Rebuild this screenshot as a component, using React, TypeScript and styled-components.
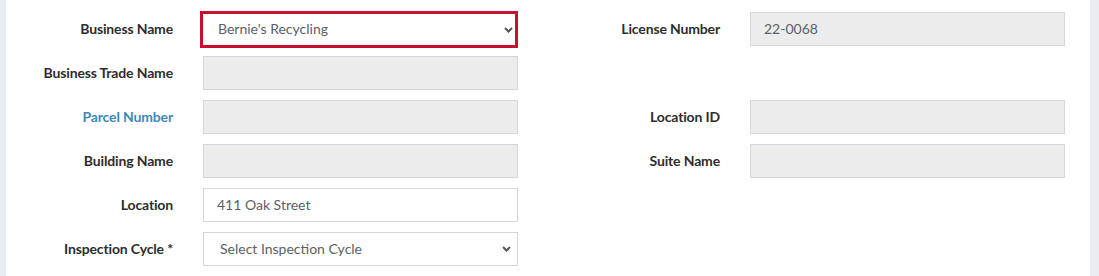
import styled, { createGlobalStyle } from 'styled-components';

const GlobalStyle = createGlobalStyle`
    html, body {
        margin: 0;
        padding: 0;
        background: #e9edf2;
    }
    body {
        font-family: Lato, "Liberation Sans", sans-serif;
    }
`;

const Page = styled.div`
    display: flex;
    height: 276px;
    overflow: hidden;
`;

const Panel = styled.div`
    margin-left: 6px;
    width: 1084px;
    background: #fff;
    padding-top: 12px;
    box-sizing: border-box;
`;

const FormGrid = styled.div`
    display: grid;
    grid-template-columns: 167px 315px 172px 315px;
    grid-auto-rows: 34px;
    column-gap: 30px;
    row-gap: 10px;
`;

const Label = styled.label<{ $link?: boolean }>`
    align-self: center;
    padding-bottom: 2px;
    text-align: right;
    font-size: 14px;
    font-weight: 700;
    letter-spacing: -0.15px;
    color: ${p => p.$link ? '#3d88bf' : '#2d2d2d'};
    white-space: nowrap;
`;

const Input = styled.input<{ $disabled?: boolean }>`
    box-sizing: border-box;
    width: 100%;
    height: 34px;
    margin: 0;
    padding: 0 13px 2px;
    border: 1px solid #d3d6dd;
    border-radius: 0;
    background: ${p => p.$disabled ? '#ececec' : '#fff'};
    font-family: Lato, "Liberation Sans", sans-serif;
    font-size: 14px;
    color: #5b5f66;
    outline: none;
`;

const SelectWrap = styled.div<{ $active?: boolean }>`
    position: relative;
    margin: ${p => p.$active ? '-1px 0 -2px -3px' : '0'};
    .chevron {
        position: absolute;
        right: ${p => p.$active ? '5px' : '7px'};
        top: 50%;
        transform: translateY(-50%);
        pointer-events: none;
    }
`;

const Select = styled.select<{ $active?: boolean }>`
    appearance: none;
    box-sizing: border-box;
    width: 100%;
    height: ${p => p.$active ? '37px' : '34px'};
    margin: 0;
    padding: 0 24px 2px ${p => p.$active ? '15px' : '16px'};
    border: ${p => p.$active ? '3px solid #c8102e' : '1px solid #d3d6dd'};
    border-radius: 0;
    background: #fff;
    font-family: Lato, "Liberation Sans", sans-serif;
    font-size: 14px;
    color: #5b5f66;
    outline: none;
`;

const Empty = styled.div``;

function Chevron() {
    return (
        <svg className='chevron' width='9' height='6' viewBox='0 0 9 6'>
            <path d='M1 1l3.5 3.5L8 1' fill='none' stroke='#555' strokeWidth='2' />
        </svg>
    );
}

function DropDown({ value, active }: { value: string; active?: boolean }) {
    return (
        <SelectWrap $active={active}>
            <Select $active={active} defaultValue={value}>
                <option>{value}</option>
            </Select>
            <Chevron />
        </SelectWrap>
    );
}

export default function App() {
    return <Page>
        <GlobalStyle />
        <Panel>
            <FormGrid>
                <Label>Business Name</Label>
                <DropDown value="Bernie's Recycling" active />
                <Label>License Number</Label>
                <Input $disabled readOnly defaultValue='22-0068' />

                <Label>Business Trade Name</Label>
                <Input $disabled readOnly />
                <Empty />
                <Empty />

                <Label $link>Parcel Number</Label>
                <Input $disabled readOnly />
                <Label>Location ID</Label>
                <Input $disabled readOnly />

                <Label>Building Name</Label>
                <Input $disabled readOnly />
                <Label>Suite Name</Label>
                <Input $disabled readOnly />

                <Label>Location</Label>
                <Input defaultValue='411 Oak Street' />
                <Empty />
                <Empty />

                <Label>Inspection Cycle *</Label>
                <DropDown value='Select Inspection Cycle' />
                <Empty />
                <Empty />
            </FormGrid>
        </Panel>
    </Page>;
}
